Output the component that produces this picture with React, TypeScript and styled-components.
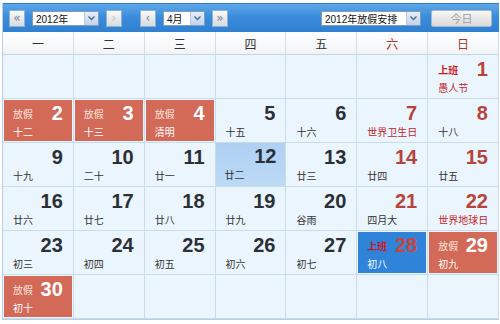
import React from 'react'
import styled, { createGlobalStyle } from 'styled-components'

type Kind = 'normal' | 'off' | 'work'

interface Day {
  n?: number
  lunar?: string
  kind?: Kind
  tag?: string
  weekend?: boolean
  lunarRed?: boolean
  today?: boolean
}

const weekNames = ['一', '二', '三', '四', '五', '六', '日']

const weeks: Day[][] = [
  [{}, {}, {}, {}, {}, {}, { n: 1, lunar: '愚人节', tag: '上班', weekend: true, lunarRed: true }],
  [
    { n: 2, lunar: '十二', kind: 'off', tag: '放假' },
    { n: 3, lunar: '十三', kind: 'off', tag: '放假' },
    { n: 4, lunar: '清明', kind: 'off', tag: '放假' },
    { n: 5, lunar: '十五' },
    { n: 6, lunar: '十六' },
    { n: 7, lunar: '世界卫生日', weekend: true, lunarRed: true },
    { n: 8, lunar: '十八', weekend: true },
  ],
  [
    { n: 9, lunar: '十九' },
    { n: 10, lunar: '二十' },
    { n: 11, lunar: '廿一' },
    { n: 12, lunar: '廿二', today: true },
    { n: 13, lunar: '廿三' },
    { n: 14, lunar: '廿四', weekend: true },
    { n: 15, lunar: '廿五', weekend: true },
  ],
  [
    { n: 16, lunar: '廿六' },
    { n: 17, lunar: '廿七' },
    { n: 18, lunar: '廿八' },
    { n: 19, lunar: '廿九' },
    { n: 20, lunar: '谷雨' },
    { n: 21, lunar: '四月大', weekend: true },
    { n: 22, lunar: '世界地球日', weekend: true, lunarRed: true },
  ],
  [
    { n: 23, lunar: '初三' },
    { n: 24, lunar: '初四' },
    { n: 25, lunar: '初五' },
    { n: 26, lunar: '初六' },
    { n: 27, lunar: '初七' },
    { n: 28, lunar: '初八', kind: 'work', tag: '上班', weekend: true },
    { n: 29, lunar: '初九', kind: 'off', tag: '放假' },
  ],
  [{ n: 30, lunar: '初十', kind: 'off', tag: '放假' }, {}, {}, {}, {}, {}, {}],
]

const GlobalStyle = createGlobalStyle`
  body {
    margin: 0;
    background: #fff;
    font-family: "Liberation Sans", "Noto Sans CJK SC", sans-serif;
  }
`

const Chevron = () => (
  <svg width='7' height='5' viewBox='0 0 7 5'>
    <path d='M0.5 0.5 L3.5 3.5 L6.5 0.5' fill='none' stroke='#4a6a8c' strokeWidth='1.4' />
  </svg>
)

const App: React.FC = () => {
  return (
    <>
      <GlobalStyle />
      <Calendar>
        <Toolbar>
          <NavButton>«</NavButton>
          <SelectBox $width={67}>
            <span>2012年</span>
            <ArrowBox><Chevron /></ArrowBox>
          </SelectBox>
          <NavButton $faded>›</NavButton>
          <NavButton $gapLeft={11}>‹</NavButton>
          <SelectBox $width={42}>
            <span>4月</span>
            <ArrowBox><Chevron /></ArrowBox>
          </SelectBox>
          <NavButton>»</NavButton>
          <Spacer />
          <SelectBox $width={100}>
            <span>2012年放假安排</span>
            <ArrowBox><Chevron /></ArrowBox>
          </SelectBox>
          <TodayButton>今日</TodayButton>
        </Toolbar>
        <Grid>
          {weekNames.map((w, i) => (
            <HeadCell key={w} $weekend={i >= 5}>{w}</HeadCell>
          ))}
          {weeks.flat().map((d, i) => (
            <Cell key={i} $today={d.today}>
              {d.n && (
                <Box $kind={d.kind || 'normal'}>
                  <TopRow>
                    <Tag $kind={d.kind || 'normal'}>{d.tag}</Tag>
                    <Num $kind={d.kind || 'normal'} $weekend={d.weekend}>{d.n}</Num>
                  </TopRow>
                  <Lunar $kind={d.kind || 'normal'} $red={d.lunarRed}>{d.lunar}</Lunar>
                </Box>
              )}
            </Cell>
          ))}
        </Grid>
      </Calendar>
    </>
  )
}

const Calendar = styled.div`
  width: 497px;
  margin: 3px 0 0 2px;
  border-left: 1px solid #b9cfe2;
  border-bottom: 1px solid #b9cfe2;
  box-sizing: border-box;
`

const Toolbar = styled.div`
  height: 29px;
  display: flex;
  align-items: center;
  padding: 0 7px 0 6px;
  gap: 7px;
  background: linear-gradient(#5ea8ea, #3b8ddb 45%, #2f80d2);
  border-top: 1px solid #2f78c4;
  box-sizing: border-box;
`

const NavButton = styled.div<{ $faded?: boolean; $gapLeft?: number }>`
  width: 14px;
  height: 15px;
  margin-left: ${p => (p.$gapLeft ? p.$gapLeft : 0)}px;
  display: flex;
  align-items: center;
  justify-content: center;
  background: linear-gradient(#fafafa, #d6dbe0);
  border: 1px solid #8fb3d6;
  color: ${p => (p.$faded ? '#c8c0b0' : '#7a8694')};
  font-size: 12px;
  line-height: 1;
  font-family: "DejaVu Sans", sans-serif;
`

const SelectBox = styled.div<{ $width: number }>`
  width: ${p => p.$width}px;
  height: 15px;
  box-sizing: border-box;
  display: flex;
  align-items: center;
  justify-content: space-between;
  background: #fff;
  border: 1px solid #7f9db9;
  padding-left: 3px;
  font-size: 10px;
  font-family: "Liberation Sans", "Noto Sans CJK SC", sans-serif;
  color: #111;
`

const ArrowBox = styled.div`
  width: 13px;
  height: 13px;
  display: flex;
  align-items: center;
  justify-content: center;
  background: linear-gradient(#e6eefa, #c3d3ec);
  border-left: 1px solid #b7c9e3;
`

const Spacer = styled.div`
  flex: 1;
`

const TodayButton = styled.div`
  width: 59px;
  height: 15px;
  margin-left: 3px;
  display: flex;
  align-items: center;
  justify-content: center;
  background: linear-gradient(#f7f7f7, #d9d9d9);
  border: 1px solid #a7b8c8;
  border-radius: 2px;
  color: #a0a0a0;
  font-size: 11px;
  font-family: "Noto Sans CJK SC", sans-serif;
`

const Grid = styled.div`
  display: grid;
  grid-template-columns: repeat(7, 1fr);
  grid-template-rows: 23px repeat(6, 44px);
`

const HeadCell = styled.div<{ $weekend?: boolean }>`
  display: flex;
  align-items: center;
  justify-content: center;
  background: linear-gradient(#ffffff, #f1f3f5);
  border-right: 1px solid #d3dde6;
  border-bottom: 1px solid #c3d6e6;
  color: ${p => (p.$weekend ? '#a8322c' : '#333')};
  font-size: 12px;
  font-family: "Noto Sans CJK SC", sans-serif;
`

const Cell = styled.div<{ $today?: boolean }>`
  background: ${p => (p.$today ? 'linear-gradient(#aed0f2, #bcdaf6)' : '#eaf5fd')};
  border-right: 1px solid #c9dceb;
  border-bottom: 1px solid #c9dceb;
  padding: ${p => (p.$today ? '0' : '1px')};
  box-sizing: border-box;
  display: flex;
  min-width: 0;
`

const boxBg: Record<Kind, string> = {
  normal: 'transparent',
  off: '#d26a57',
  work: '#2f84da',
}

const Box = styled.div<{ $kind: Kind }>`
  flex: 1;
  min-width: 0;
  display: flex;
  flex-direction: column;
  background: ${p => boxBg[p.$kind]};
  padding: 3px 9px 0 9px;
`

const TopRow = styled.div`
  display: flex;
  justify-content: space-between;
  align-items: center;
  height: 21px;
`

const Tag = styled.span<{ $kind: Kind }>`
  font-size: 10px;
  font-family: "Noto Sans CJK SC", sans-serif;
  color: ${p => (p.$kind === 'off' ? '#fbe3dc' : '#d0161b')};
  font-weight: ${p => (p.$kind === 'off' ? 'normal' : 'bold')};
`

const Num = styled.span<{ $kind: Kind; $weekend?: boolean }>`
  font-size: 20px;
  font-weight: bold;
  font-family: "Liberation Sans", sans-serif;
  color: ${p =>
    p.$kind === 'off' ? '#fff' : p.$kind === 'work' ? '#c8453c' : p.$weekend ? '#b9423a' : '#2c3036'};
`

const Lunar = styled.div<{ $kind: Kind; $red?: boolean }>`
  margin-top: 1px;
  font-size: 10px;
  line-height: 13px;
  white-space: nowrap;
  font-family: "Noto Sans CJK SC", sans-serif;
  color: ${p => (p.$kind !== 'normal' ? '#fff' : p.$red ? '#c4262b' : '#333')};
`

export default App
